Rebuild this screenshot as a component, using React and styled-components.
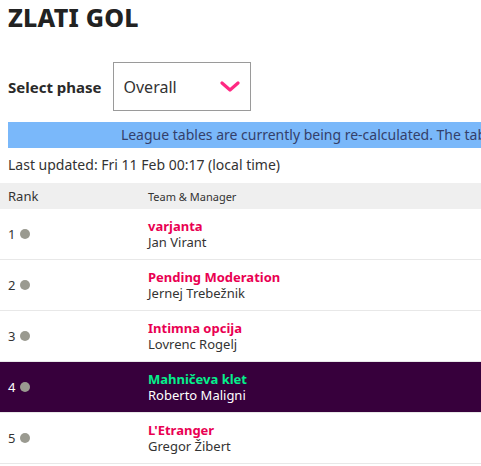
import React from 'react'
import styled, { createGlobalStyle } from 'styled-components'

const GlobalStyle = createGlobalStyle`
  html, body {
    margin: 0;
    padding: 0;
    overflow: hidden;
    background: #ffffff;
  }
  body {
    font-family: "Noto Sans", "Liberation Sans", sans-serif;
    color: #37003c;
  }
`

const teams = [
  { rank: 1, team: 'varjanta', manager: 'Jan Virant' },
  { rank: 2, team: 'Pending Moderation', manager: 'Jernej Trebežnik' },
  { rank: 3, team: 'Intimna opcija', manager: 'Lovrenc Rogelj' },
  { rank: 4, team: 'Mahničeva klet', manager: 'Roberto Maligni', mine: true },
  { rank: 5, team: "L'Etranger", manager: 'Gregor Žibert' },
]

function Chevron() {
  return (
    <svg width="20" height="12" viewBox="0 0 20 12" fill="none">
      <path d="M2 2 L10 9 L18 2" stroke="#ff2882" strokeWidth="3.2" strokeLinecap="round" strokeLinejoin="round" />
    </svg>
  )
}

function App() {
  return (
    <Page>
      <GlobalStyle />
      <Title>ZLATI GOL</Title>
      <PhaseRow>
        <PhaseLabel>Select phase</PhaseLabel>
        <SelectBox>
          <span>Overall</span>
          <Chevron />
        </SelectBox>
      </PhaseRow>
      <Banner>League tables are currently being re-calculated. The tables will be updated shortly.</Banner>
      <Updated>Last updated: Fri 11 Feb 00:17 (local time)</Updated>
      <Table>
        <HeadRow>
          <RankCell>Rank</RankCell>
          <TeamCell>Team &amp; Manager</TeamCell>
        </HeadRow>
        {teams.map((t) => (
          <Row key={t.rank} $mine={t.mine}>
            <RankCell>
              {t.rank}
              <Dot />
            </RankCell>
            <TeamCell>
              <TeamName $mine={t.mine}>{t.team}</TeamName>
              <Manager $mine={t.mine}>{t.manager}</Manager>
            </TeamCell>
          </Row>
        ))}
      </Table>
    </Page>
  )
}

const Page = styled.div`
  width: 766px;
  padding: 0 8px;
`

const Title = styled.h1`
  margin: 0;
  padding-top: 3px;
  font-size: 25px;
  line-height: 28px;
  font-weight: 800;
  color: #222222;
  letter-spacing: 0.2px;
`

const PhaseRow = styled.div`
  display: flex;
  align-items: center;
  gap: 11px;
  margin-top: 31px;
`

const PhaseLabel = styled.span`
  font-size: 15px;
  font-weight: 700;
  color: #2a2a2a;
`

const SelectBox = styled.div`
  box-sizing: border-box;
  width: 138px;
  height: 49px;
  border: 1px solid #9a9a9a;
  display: flex;
  align-items: center;
  justify-content: space-between;
  padding: 0 10px 0 10px;
  font-size: 16px;
  color: #333333;
  svg {
    margin-top: 1px;
  }
`

const Banner = styled.div`
  margin-top: 11px;
  height: 26px;
  background: #7ab8fa;
  color: #34406a;
  font-size: 14px;
  line-height: 26px;
  text-align: center;
  white-space: nowrap;
  overflow: hidden;
`

const Updated = styled.div`
  margin-top: 7px;
  font-size: 14px;
  line-height: 20px;
  color: #333333;
`

const Table = styled.div`
  margin: 8px -8px 0;
  padding: 0 8px;
`

const HeadRow = styled.div`
  display: flex;
  align-items: center;
  height: 26px;
  margin: 0 -8px;
  padding: 0 8px;
  background: #efefef;
  font-size: 11px;
  color: #333333;
`

const Row = styled.div`
  display: flex;
  align-items: center;
  height: 50px;
  margin: 0 -8px;
  padding: 0 8px;
  border-bottom: 1px solid #e8e8e8;
  background: ${(p) => (p.$mine ? '#37003c' : '#ffffff')};
  color: ${(p) => (p.$mine ? '#ffffff' : '#333333')};
`

const RankCell = styled.div`
  width: 140px;
  display: flex;
  align-items: center;
  gap: 5px;
  font-size: 13px;
`

const Dot = styled.span`
  width: 10px;
  height: 10px;
  border-radius: 50%;
  background: #9a9a90;
`

const TeamCell = styled.div`
  display: flex;
  flex-direction: column;
`

const TeamName = styled.span`
  font-size: 13px;
  font-weight: 700;
  line-height: 16px;
  color: ${(p) => (p.$mine ? '#05f08c' : '#e90052')};
`

const Manager = styled.span`
  font-size: 13px;
  line-height: 16px;
  color: ${(p) => (p.$mine ? '#ffffff' : '#333333')};
`

export default App
